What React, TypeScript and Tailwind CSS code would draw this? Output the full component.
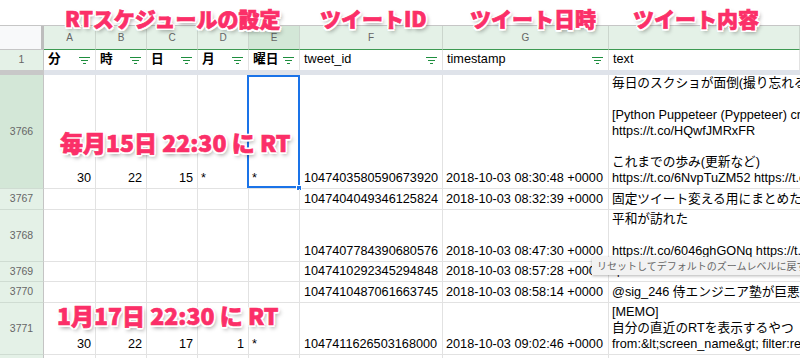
import React from "react";

const FONT = "font-['Liberation_Sans','Noto_Sans_CJK_JP',sans-serif]";
const GRID = "grid grid-cols-[44px_52px_51px_51px_51px_51px_143px_166px_191px]";
const PINK =
  "absolute whitespace-nowrap font-['Noto_Sans_CJK_JP',sans-serif] font-black text-[#fb2f68] leading-none [-webkit-text-stroke:0.7px_#fb2f68] [text-shadow:2px_0_0_#fff,-2px_0_0_#fff,0_2px_0_#fff,0_-2px_0_#fff,1.5px_1.5px_0_#fff,-1.5px_1.5px_0_#fff,1.5px_-1.5px_0_#fff,-1.5px_-1.5px_0_#fff,2px_3px_4px_rgba(0,0,0,0.4)]";

function FilterIcon() {
  return (
    <svg width="11" height="7" viewBox="0 0 11 7" className="shrink-0">
      <g stroke="#1e8e3e" strokeWidth="1">
        <line x1="0" y1="0.5" x2="11" y2="0.5" />
        <line x1="2" y1="3.5" x2="9" y2="3.5" />
        <line x1="4" y1="6.5" x2="7" y2="6.5" />
      </g>
    </svg>
  );
}

type RowData = {
  num: string;
  h: string;
  a?: string;
  b?: string;
  c?: string;
  d?: string;
  e?: string;
  f: string;
  g: string;
  text: string[];
  sel?: boolean;
};

const rows: RowData[] = [
  {
    num: "3766",
    h: "h-[114px]",
    a: "30",
    b: "22",
    c: "15",
    d: "*",
    e: "*",
    f: "1047403580590673920",
    g: "2018-10-03 08:30:48 +0000",
    text: [
      "毎日のスクショが面倒(撮り忘れるので自動化した)",
      "",
      "[Python Puppeteer (Pyppeteer) cron で定期実行]",
      "https://t.co/HQwfJMRxFR",
      "",
      "これまでの歩み(更新など)",
      "https://t.co/6NvpTuZM52 https://t.co/bH7yCq",
    ],
    sel: true,
  },
  {
    num: "3767",
    h: "h-[21px]",
    f: "1047404049346125824",
    g: "2018-10-03 08:32:39 +0000",
    text: ["固定ツイート変える用にまとめたやつ"],
  },
  {
    num: "3768",
    h: "h-[52px]",
    f: "1047407784390680576",
    g: "2018-10-03 08:47:30 +0000",
    text: ["平和が訪れた", "", "https://t.co/6046ghGONq https://t.co/aQ2"],
  },
  {
    num: "3769",
    h: "h-[20px]",
    f: "1047410292345294848",
    g: "2018-10-03 08:57:28 +0000",
    text: ["草"],
  },
  {
    num: "3770",
    h: "h-[21px]",
    f: "1047410487061663745",
    g: "2018-10-03 08:58:14 +0000",
    text: ["@sig_246 侍エンジニア塾が巨悪すぎる"],
  },
  {
    num: "3771",
    h: "h-[52px]",
    a: "30",
    b: "22",
    c: "17",
    d: "1",
    e: "*",
    f: "1047411626503168000",
    g: "2018-10-03 09:02:46 +0000",
    text: ["[MEMO]", "自分の直近のRTを表示するやつ", "from:&lt;screen_name&gt; filter:retweets"],
  },
  {
    num: "3772",
    h: "h-[21px]",
    f: "",
    g: "",
    text: [""],
  },
];

const CELL = "border-r border-b border-[#e2e2e2] flex flex-col justify-end pb-[2px] leading-[16px] overflow-hidden whitespace-nowrap";

function DataRow({ r }: { r: RowData }) {
  const num = (v?: string) => (
    <div className={`${CELL} items-end pr-[4px]`}>{v ?? ""}</div>
  );
  const left = (v?: string) => (
    <div className={`${CELL} pl-[3px]`}>{v ?? ""}</div>
  );
  return (
    <div className={`${GRID} ${r.h}`}>
      <div
        className={`flex items-center justify-center text-[10.5px] text-[#666] border-r border-r-[#c4c4c4] border-b border-b-[#cfdcd2] ${
          r.sel ? "bg-[#d3e7d7]" : "bg-[#e4f1e7]"
        }`}
      >
        {r.num}
      </div>
      {num(r.a)}
      {num(r.b)}
      {num(r.c)}
      {r.d === "1" ? num(r.d) : left(r.d)}
      <div className={`${CELL} pl-[3px] relative overflow-visible`}>
        {r.e ?? ""}
        {r.sel && (
          <>
            <div className="absolute left-[-2px] top-0 right-[-1px] bottom-0 border-2 border-[#1a73e8] pointer-events-none" />
            <div className="absolute right-[-3px] bottom-[-3px] w-[6px] h-[6px] bg-[#1a73e8] border border-white" />
          </>
        )}
      </div>
      <div className={`${CELL} pl-[4px]`}>{r.f}</div>
      <div className={`${CELL} pl-[3px]`}>{r.g}</div>
      <div className={`${CELL} pl-[3px] border-r-0 whitespace-pre`}>
        {r.text.map((t, i) => (
          <div key={i} className="h-[16px]">
            {t}
          </div>
        ))}
      </div>
    </div>
  );
}

export default function App() {
  const letters = ["A", "B", "C", "D", "E", "F", "G", ""];
  const heads = ["分", "時", "日", "月", "曜日", "tweet_id", "timestamp", "text"];
  return (
    <div className={`relative w-[800px] h-[358px] overflow-hidden bg-white text-[12.7px] text-black ${FONT}`}>
      {/* top strip */}
      <div className="h-[26px] bg-white border-b border-[#c6c6c6]" />
      {/* column letters */}
      <div className={`${GRID} h-[24px]`}>
        <div className="bg-[#f8f9fa] border-r-[3px] border-r-[#bdbdbd] border-b border-b-[#c6c6c6]" />
        {letters.map((l, i) => (
          <div
            key={i}
            className={`flex items-center justify-center text-[10px] text-[#666] border-r border-r-[#cbd6cd] border-b border-b-[#3d9a52] ${
              l === "E" ? "bg-[#d3e7d7]" : "bg-[#e4f1e7]"
            }`}
          >
            {l}
          </div>
        ))}
      </div>
      {/* header row 1 */}
      <div className={`${GRID} h-[20px]`}>
        <div className="flex items-center justify-center text-[10.5px] text-[#666] bg-[#e4f1e7] border-r border-r-[#c4c4c4]">
          1
        </div>
        {heads.map((h, i) => (
          <div
            key={i}
            className={`flex items-center justify-between pl-[4px] pr-[5px] border-r border-[#e2e2e2] whitespace-nowrap overflow-hidden ${
              i < 5 ? "font-semibold" : ""
            }`}
          >
            <span>{h}</span>
            {i < 7 && <FilterIcon />}
          </div>
        ))}
      </div>
      {/* frozen divider */}
      <div className="flex h-[5px]">
        <div className="w-[44px] bg-[#c8c8c8]" />
        <div className="flex-1 bg-[#dfe3ea]" />
      </div>
      {rows.map((r) => (
        <DataRow key={r.num} r={r} />
      ))}

      {/* tooltip */}
      <div className="absolute left-[592px] top-[257px] h-[18px] w-[240px] bg-[#f2f2f2] shadow-[0_1px_3px_rgba(0,0,0,0.3)] pl-[5px] text-[10px] leading-[18px] text-[#666] whitespace-nowrap font-['Noto_Sans_CJK_JP',sans-serif]">
        リセットしてデフォルトのズームレベルに戻す
      </div>

      {/* pink annotations */}
      <div className={`${PINK} left-[65px] top-[8px] text-[21px]`}>RTスケジュールの設定</div>
      <div className={`${PINK} left-[320px] top-[8px] text-[21px]`}>ツイートID</div>
      <div className={`${PINK} left-[470px] top-[8px] text-[21px]`}>ツイート日時</div>
      <div className={`${PINK} left-[633px] top-[8px] text-[21px]`}>ツイート内容</div>
      <div className={`${PINK} left-[60px] top-[131px] text-[23px]`}>毎月15日 22:30 に RT</div>
      <div className={`${PINK} left-[57px] top-[304px] text-[23px]`}>1月17日 22:30 に RT</div>
    </div>
  );
}
